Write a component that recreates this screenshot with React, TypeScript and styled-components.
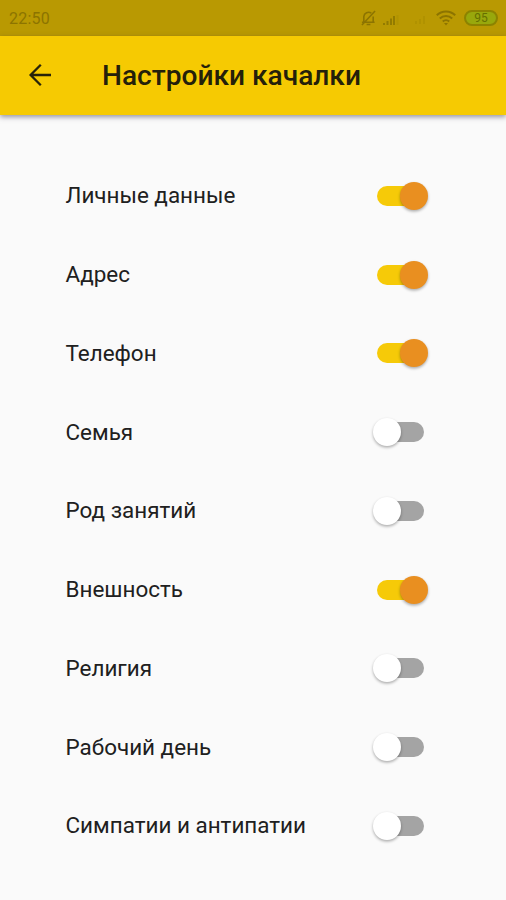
import React, { useState } from "react";
import styled, { createGlobalStyle } from "styled-components";

const GlobalStyle = createGlobalStyle`
  * { box-sizing: border-box; }
  body { margin: 0; background: #fafafa; }
`;

const Screen = styled.div`
  width: 506px;
  height: 900px;
  display: flex;
  flex-direction: column;
  overflow: hidden;
  background: #fafafa;
  font-family: Roboto, "Liberation Sans", sans-serif;
  color: #202020;
`;

const StatusBar = styled.header`
  height: 36px;
  flex: none;
  display: flex;
  align-items: center;
  padding: 0 8px 0 9px;
  background: #b99902;
`;

const Clock = styled.span`
  flex: 1;
  padding-top: 2px;
  font-size: 16px;
  line-height: 20px;
  letter-spacing: 0.2px;
  color: #8c7400;
`;

const StatusIcons = styled.div`
  display: flex;
  align-items: center;
`;

const StatusIcon = styled.svg<{ $gap: number; $drop?: number }>`
  display: block;
  margin-top: ${(p) => p.$drop ?? 0}px;
  margin-right: ${(p) => p.$gap}px;
`;

const Battery = styled.span`
  width: 34px;
  height: 16px;
  display: flex;
  align-items: center;
  justify-content: center;
  border: 2px solid #8c8300;
  border-radius: 8px;
  background: #98a80c;
  font-size: 12px;
  line-height: 12px;
  color: #667000;
`;

const AppBar = styled.div`
  height: 79px;
  flex: none;
  display: flex;
  align-items: center;
  padding-left: 28px;
  background: #f6ca02;
  box-shadow: 0 2px 5px rgba(50, 45, 70, 0.5);
`;

const BackButton = styled.button`
  width: 74px;
  height: 40px;
  display: flex;
  align-items: center;
  padding: 0 0 1px;
  border: 0;
  background: none;
`;

const Title = styled.h1`
  margin: 0;
  font-size: 28.1px;
  line-height: 36px;
  font-weight: 500;
  color: #24200a;
  white-space: nowrap;
`;

const List = styled.main`
  display: grid;
  grid-auto-rows: 78.75px;
  padding: 41.6px 77px 0 65.5px;
`;

const Row = styled.label`
  display: flex;
  align-items: center;
  justify-content: space-between;
`;

const Label = styled.span`
  padding-bottom: 1px;
  font-size: 22.45px;
  line-height: 28px;
  white-space: nowrap;
`;

const Track = styled.button<{ $on: boolean }>`
  width: 47px;
  height: 20px;
  display: flex;
  align-items: center;
  justify-content: ${(p) => (p.$on ? "flex-end" : "flex-start")};
  margin-right: 5px;
  padding: 0;
  border: 0;
  border-radius: 10px;
  background: ${(p) => (p.$on ? "#f6ca08" : "#a4a4a4")};
`;

const Thumb = styled.span<{ $on: boolean }>`
  width: 28px;
  height: 28px;
  flex: none;
  margin: ${(p) => (p.$on ? "0 -4px 0 0" : "0 0 0 -4px")};
  border-radius: 50%;
  background: ${(p) => (p.$on ? "#e98f20" : "#fff")};
  box-shadow: 0 1.5px 3px rgba(0, 0, 0, 0.32);
`;

const SECTIONS: [string, boolean][] = [
  ["Личные данные", true],
  ["Адрес", true],
  ["Телефон", true],
  ["Семья", false],
  ["Род занятий", false],
  ["Внешность", true],
  ["Религия", false],
  ["Рабочий день", false],
  ["Симпатии и антипатии", false],
];

export default function App() {
  const [enabled, setEnabled] = useState(SECTIONS.map(([, on]) => on));
  const toggle = (index: number) =>
    setEnabled((current) => current.map((on, i) => (i === index ? !on : on)));

  return (
    <>
      <GlobalStyle />
      <Screen>
        <StatusBar>
          <Clock>22:50</Clock>
          <StatusIcons>
            <StatusIcon $gap={7} width="15" height="16" viewBox="0 0 16 17" fill="none" stroke="#8c7400" strokeWidth="1.7">
              <path d="M3 12.5V7a5 5 0 0 1 8-3.6M13 7v5.5M1 13h13.5M6 15.5h4M15 1 1 16" />
            </StatusIcon>
            <StatusIcon $gap={16} $drop={4} width="16" height="12" viewBox="0 0 16 12" fill="#927b00">
              <path d="M0 9h2v2H0zM3.5 7h2v4h-2zM7 4.5h2V11H7zM10 2h2v9h-2z" />
              <path d="M13.5 1h2v10h-2z" opacity=".2" />
            </StatusIcon>
            <StatusIcon $gap={9} $drop={4} width="12" height="10" viewBox="0 0 12 10" fill="#b09200">
              <path d="M0 6h2v3H0zM4 4h2v5H4zM8 1h2v8H8z" />
            </StatusIcon>
            <StatusIcon $gap={8} width="20" height="16" viewBox="0 0 20 16" fill="none" stroke="#8c7400" strokeWidth="2">
              <path d="M.8 5.2a13 13 0 0 1 18.4 0M3.8 8.5a8.8 8.8 0 0 1 12.4 0M6.8 11.5a4.6 4.6 0 0 1 6.4 0" />
              <path d="m10 15.5-2-2.5h4z" fill="#8c7400" stroke="none" />
            </StatusIcon>
            <Battery>95</Battery>
          </StatusIcons>
        </StatusBar>
        <AppBar>
          <BackButton aria-label="Назад">
            <svg width="24" height="24" viewBox="0 0 24 24" fill="none" stroke="#282309" strokeWidth="2.3">
              <path d="M23 12H2.5M12.8 1.8 2.6 12l10.2 10.2" />
            </svg>
          </BackButton>
          <Title>Настройки качалки</Title>
        </AppBar>
        <List>
          {SECTIONS.map(([name], i) => (
            <Row key={name}>
              <Label>{name}</Label>
              <Track
                $on={enabled[i]}
                role="switch"
                aria-checked={enabled[i]}
                aria-label={name}
                onClick={() => toggle(i)}
              >
                <Thumb $on={enabled[i]} />
              </Track>
            </Row>
          ))}
        </List>
      </Screen>
    </>
  );
}
